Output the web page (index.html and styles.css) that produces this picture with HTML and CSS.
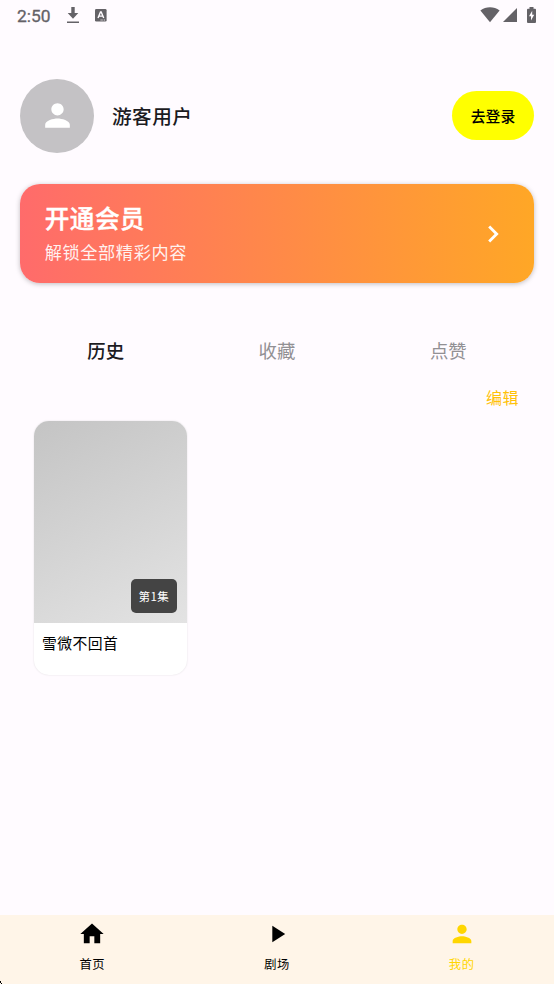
FILE: index.html
```html
<!DOCTYPE html>
<html lang="zh-CN">
<head>
<meta charset="utf-8">
<title>我的</title>
<link rel="stylesheet" href="styles.css">
</head>
<body>
<div class="app">
  <header class="status">
    <span class="clock">2:50</span>
    <svg class="download" width="14" height="18" viewBox="0 0 14 18"><path d="M5.300 0h3.400v6h3.600L7 11.700 1.700 6h3.600zM1 14.500h12v1.600H1z"/></svg>
    <svg class="keyboard" width="12" height="13" viewBox="0 0 12 13"><rect width="11.6" height="12.6" rx="1.3"/><path class="cut" d="M3 9 5.500 3h.7L8.700 9M4 7.100h3.700"/><path class="dots" d="M5.500 11h1.300M7.300 11h1M9 11h1"/></svg>
    <svg class="wifi" width="20" height="16" viewBox="0 0 20 16"><path d="M10 15.300.4 3.500C6-.7 14-.7 19.600 3.500z"/></svg>
    <svg class="signal" width="14" height="14" viewBox="0 0 14 14"><path d="M14 0v14H0z"/></svg>
    <svg class="battery" width="9" height="17" viewBox="0 0 9 17"><path d="M2.500 0h4v1.800H8q1 0 1 1V15q0 1-1 1H1q-1 0-1-1V2.800q0-1 1-1h1.500z"/><path class="bolt" d="M5.200 3.800 2 9.300h2v4.300l3.200-5.800h-2z"/></svg>
  </header>

  <section class="profile">
    <div class="avatar"><svg width="37" height="37" viewBox="0 0 24 24"><path d="M12 12c2.210 0 4-1.790 4-4s-1.790-4-4-4-4 1.790-4 4 1.790 4 4 4zm0 2c-2.670 0-8 1.340-8 4v2h16v-2c0-2.660-5.330-4-8-4z"/></svg></div>
    <h1 class="name">游客用户</h1>
    <button class="login">去登录</button>
  </section>

  <section class="vip">
    <div>
      <h2 class="vip-title">开通会员</h2>
      <p class="vip-text">解锁全部精彩内容</p>
    </div>
    <svg width="34" height="34" viewBox="0 0 24 24"><path d="M10 6 8.590 7.410 13.170 12l-4.580 4.590L10 18l6-6z"/></svg>
  </section>

  <nav class="tabs">
    <span class="tab active">历史</span>
    <span class="tab">收藏</span>
    <span class="tab">点赞</span>
  </nav>
  <div class="edit">编辑</div>

  <main class="grid">
    <article class="card">
      <div class="cover"><span class="episode">第1集</span></div>
      <h3 class="title">雪微不回首</h3>
    </article>
  </main>

  <footer class="bottom">
    <div class="item"><svg width="28" height="28" viewBox="0 0 24 24"><path d="M10 20v-6h4v6h5v-8h3L12 3 2 12h3v8z"/></svg><span>首页</span></div>
    <div class="item"><svg width="28" height="28" viewBox="0 0 24 24"><path d="M8 5v14l11-7z"/></svg><span>剧场</span></div>
    <div class="item current"><svg width="28" height="28" viewBox="0 0 24 24"><path d="M12 12c2.210 0 4-1.790 4-4s-1.790-4-4-4-4 1.790-4 4 1.790 4 4 4zm0 2c-2.670 0-8 1.340-8 4v2h16v-2c0-2.660-5.330-4-8-4z"/></svg><span>我的</span></div>
    <i class="corner"></i>
  </footer>
</div>
</body>
</html>
```
FILE: styles.css
```css
* { box-sizing: border-box; }
body {
  margin: 0;
  background: #fffbff;
  color: #1c1b1f;
  font-family: "Noto Sans CJK SC", sans-serif;
}
h1, h2, h3, p { margin: 0; }
svg { display: block; fill: currentColor; }
.app { height: 984px; display: flex; flex-direction: column; overflow: hidden; }
.status {
  height: 30px;
  flex: none;
  display: flex;
  align-items: flex-start;
  padding: 7px 18px 0 17px;
  color: #646267;
}
.clock { width: 49px; font: 400 17.4px/18px Roboto, sans-serif; -webkit-text-stroke: .3px #646267; }
.keyboard { margin: 2px auto 0 15px; }
.cut { fill: none; stroke: #fffbff; stroke-width: 1.4; }
.dots { fill: none; stroke: #fffbff; stroke-width: .8; }
.wifi { margin-right: 3px; }
.signal { margin: 1px 10px 0 0; }
.battery { margin-top: -.5px; }
.bolt { fill: #fffbff; }
.profile { display: flex; align-items: center; height: 74px; margin: 48.700px 20px 0; flex: none; }
.avatar {
  width: 74px;
  height: 74px;
  border-radius: 50%;
  background: #c4c2c5;
  color: #fff;
  display: grid;
  place-items: center;
}
.name { margin-left: 18px; font-size: 19.7px; line-height: 30px; font-weight: 500; letter-spacing: .4px; }
.login {
  margin-left: auto;
  width: 82px;
  height: 49px;
  padding: 0;
  border: 0;
  border-radius: 25px;
  background: #ff0;
  color: #000;
  font: 500 14.8px/20px "Noto Sans CJK SC", sans-serif;
}
.vip {
  flex: none;
  display: flex;
  align-items: center;
  justify-content: space-between;
  height: 98.5px;
  margin: 31.700px 19.700px 0;
  padding: 0 24.500px 0 25px;
  border-radius: 20px;
  background: linear-gradient(90deg, #ff6b6b, #ffa726);
  box-shadow: 0 1px 5px rgba(0, 0, 0, .25);
  color: #fff;
}
.vip-title { margin-top: -3px; font-size: 24.6px; line-height: 36px; font-weight: 500; letter-spacing: .5px; -webkit-text-stroke: .4px #fff; }
.vip-text { font-size: 17.2px; line-height: 26px; margin-top: 4.500px; letter-spacing: .6px; opacity: .9; }
.tabs { flex: none; display: grid; grid-template-columns: repeat(3, 1fr); margin: 53.600px 20px 0; }
.tab { text-align: center; font-size: 18.4px; line-height: 28px; color: #929094; }
.active { color: #1c1b1f; font-weight: 500; }
.edit { flex: none; margin: 21px 35px 0; text-align: right; color: #ffc107; font-size: 16px; line-height: 24px; letter-spacing: .5px; }
.grid { flex: 1; display: grid; grid-template-columns: repeat(3, 152.4px); gap: 15px; align-items: start; padding: 11.200px 34.400px 0; }
.card { height: 254px; border-radius: 15px; overflow: hidden; background: #fff; box-shadow: 0 0 2px rgba(0, 0, 0, .13); }
.cover {
  height: 202.500px;
  padding: 10px;
  display: flex;
  justify-content: flex-end;
  align-items: flex-end;
  background: linear-gradient(152deg, #c4c4c4, #e3e3e3);
}
.episode { width: 46px; height: 34px; border-radius: 5px; background: #444; color: #fff; text-align: center; font-size: 11.5px; line-height: 34px; letter-spacing: .4px; }
.title { padding: 9px 7.500px; font-size: 14.8px; line-height: 22px; font-weight: 400; letter-spacing: .5px; color: #000; }
.bottom { position: relative; flex: none; height: 69px; display: grid; grid-template-columns: repeat(3, 1fr); padding: 4.600px 0 0; background: #fff5e8; color: #000; }
.item { display: flex; flex-direction: column; align-items: center; font-size: 12.3px; line-height: 18px; letter-spacing: .5px; }
.item span { margin-top: 7.200px; }
.current { color: #ffd600; }
.corner { position: absolute; left: 0; bottom: 0; width: 2px; height: 3px; background: #000; clip-path: polygon(0 0, 50% 0, 50% 66%, 100% 66%, 100% 100%, 50% 100%, 50% 66%, 0 66%); }
```
